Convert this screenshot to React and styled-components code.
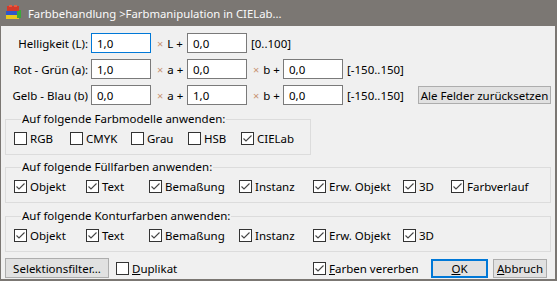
import React from 'react';
import styled, { createGlobalStyle } from 'styled-components';

const Global = createGlobalStyle`
  html, body { margin: 0; padding: 0; background: #f0f0f0; }
  body { font-family: "Noto Sans", "Segoe UI", sans-serif; font-size: 11.5px; color: #000; }
  * { box-sizing: border-box; }
`;

const FRAME = '#7b7773';

const Window = styled.div`
  width: 557px;
  height: 281px;
  display: flex;
  flex-direction: column;
  background: #f0f0f0;
  border-left: 1px solid ${FRAME};
  border-right: 2px solid ${FRAME};
  border-bottom: 2px solid ${FRAME};
`;

const TitleBar = styled.div`
  height: 26px;
  flex: none;
  background: ${FRAME};
  color: #fafafa;
  display: flex;
  align-items: center;
  gap: 6px;
  padding-left: 3px;
  font-size: 11.3px;
  white-space: nowrap;
`;

const Content = styled.div`
  flex: 1;
  display: flex;
  flex-direction: column;
  padding: 7px 4px 0 4px;
`;

const FormRow = styled.div`
  display: flex;
  align-items: center;
  height: 20px;
  margin-bottom: 6px;
  white-space: nowrap;
`;

const FieldLabel = styled.div`
  width: 83px;
  margin-right: 3px;
  text-align: right;
`;

const Field = styled.div`
  width: 60px;
  height: 20px;
  border: 1px solid ${p => (p.$focus ? '#0078d7' : '#7a7a7a')};
  background: #fff;
  padding-left: 5px;
  display: flex;
  align-items: center;
`;

const Op = styled.div`
  width: 36px;
  padding-left: 6px;
  display: flex;
  align-items: center;
  gap: 4px;
`;

const Times = styled.span`
  color: #c99472;
  font-size: 11px;
`;

const Range = styled.div`
  margin-left: 4px;
`;

const Button = styled.button`
  font: inherit;
  color: #000;
  height: ${p => p.$h || 19}px;
  width: ${p => (p.$w ? `${p.$w}px` : 'auto')};
  margin-left: ${p => (p.$ml != null ? `${p.$ml}px` : '0')};
  padding: 0 4px;
  background: #e1e1e1;
  border: ${p => (p.$default ? '2px solid #0078d7' : '1px solid #adadad')};
  display: flex;
  align-items: center;
  justify-content: center;
  white-space: nowrap;
  flex: none;
`;

const Group = styled.fieldset`
  margin: ${p => p.$mt}px 0 0 0;
  width: ${p => p.$w}px;
  border: 1px solid #dcdcdc;
  padding: 0 8px 9px 8px;
  min-width: 0;
`;

const Legend = styled.legend`
  padding: 0 1px;
  margin-left: 7px;
  line-height: 14px;
  height: 14px;
`;

const CheckRow = styled.div`
  display: flex;
  align-items: center;
  height: 13px;
  margin-top: 6px;
`;

const CheckItem = styled.label`
  display: flex;
  align-items: center;
  gap: 3px;
  width: ${p => (p.$w ? `${p.$w}px` : 'auto')};
  margin-left: ${p => (p.$ml ? `${p.$ml}px` : '0')};
  flex: none;
  white-space: nowrap;
  line-height: 13px;
`;

const Box = styled.span`
  width: 13px;
  height: 13px;
  border: 1px solid #333;
  background: #fff;
  flex: none;
  display: flex;
  align-items: center;
  justify-content: center;
`;

const BottomRow = styled.div`
  display: flex;
  align-items: center;
  margin-top: 6px;
  height: 20px;
  padding-right: 4px;
`;

const Spacer = styled.div`
  flex: 1;
`;

const U = styled.span`
  text-decoration: underline;
`;

function Check({ checked, w, ml, children }) {
  return (
    <CheckItem $w={w} $ml={ml}>
      <Box>
        {checked && (
          <svg width="11" height="11" viewBox="0 0 11 11">
            <polyline points="1.5,5.5 4,8 9.5,2.5" fill="none" stroke="#444" strokeWidth="1.1" />
          </svg>
        )}
      </Box>
      <span>{children}</span>
    </CheckItem>
  );
}

function AppIcon() {
  return (
    <svg width="18" height="18" viewBox="0 0 18 18">
      <rect x="2" y="11" width="13" height="4" fill="#e8c81c" />
      <rect x="2" y="7" width="13" height="4" fill="#2f57c8" />
      <rect x="13" y="6" width="4" height="8" fill="#3aa83a" />
      <rect x="3" y="2" width="12" height="5" fill="#d23a2a" />
      <rect x="5" y="1" width="3" height="2" fill="#e85a40" />
      <rect x="10" y="1" width="3" height="2" fill="#e85a40" />
    </svg>
  );
}

const fillItems = [
  ['Objekt', 72], ['Text', 63], ['Bemaßung', 90], ['Instanz', 74], ['Erw. Objekt', 90], ['3D', 48],
];

export default function App() {
  return (
    <>
      <Global />
      <Window>
        <TitleBar>
          <AppIcon />
          <span>Farbbehandlung &gt;Farbmanipulation in CIELab...</span>
        </TitleBar>
        <Content>
          <FormRow>
            <FieldLabel>Helligkeit (L):</FieldLabel>
            <Field $focus>1,0</Field>
            <Op><Times>×</Times><span>L +</span></Op>
            <Field>0,0</Field>
            <Range>[0..100]</Range>
          </FormRow>
          <FormRow>
            <FieldLabel>Rot - Grün (a):</FieldLabel>
            <Field>1,0</Field>
            <Op><Times>×</Times><span>a +</span></Op>
            <Field>0,0</Field>
            <Op><Times>×</Times><span>b +</span></Op>
            <Field>0,0</Field>
            <Range>[-150..150]</Range>
          </FormRow>
          <FormRow>
            <FieldLabel>Gelb - Blau (b)</FieldLabel>
            <Field>0,0</Field>
            <Op><Times>×</Times><span>a +</span></Op>
            <Field>1,0</Field>
            <Op><Times>×</Times><span>b +</span></Op>
            <Field>0,0</Field>
            <Range>[-150..150]</Range>
            <Spacer />
            <Button $w={133} $h={18}>Ale Felder zurücksetzen</Button>
          </FormRow>

          <Group $mt={1} $w={306}>
            <Legend>Auf folgende Farbmodelle anwenden:</Legend>
            <CheckRow>
              <Check w={56}>RGB</Check>
              <Check w={61}>CMYK</Check>
              <Check w={57}>Grau</Check>
              <Check w={53}>HSB</Check>
              <Check checked>CIELab</Check>
            </CheckRow>
          </Group>

          <Group $mt={5} $w={546}>
            <Legend>Auf folgende Füllfarben anwenden:</Legend>
            <CheckRow>
              {fillItems.map(([t, w]) => (
                <Check key={t} checked w={w}>{t}</Check>
              ))}
              <Check checked>Farbverlauf</Check>
            </CheckRow>
          </Group>

          <Group $mt={6} $w={546}>
            <Legend>Auf folgende Konturfarben anwenden:</Legend>
            <CheckRow>
              {fillItems.map(([t, w]) => (
                <Check key={t} checked w={w}>{t}</Check>
              ))}
            </CheckRow>
          </Group>

          <BottomRow>
            <Button $w={104} $h={20}>Selektionsfilter...</Button>
            <CheckItem $w={197} $ml={7}>
              <Box />
              <span><U>D</U>uplikat</span>
            </CheckItem>
            <Check checked>
              <U>F</U>arben vererben
            </Check>
            <Spacer />
            <Button $default $w={57} $h={19}><span><U>O</U>K</span></Button>
            <Button $w={54} $h={19} $ml={5}><span><U>A</U>bbruch</span></Button>
          </BottomRow>
        </Content>
      </Window>
    </>
  );
}
